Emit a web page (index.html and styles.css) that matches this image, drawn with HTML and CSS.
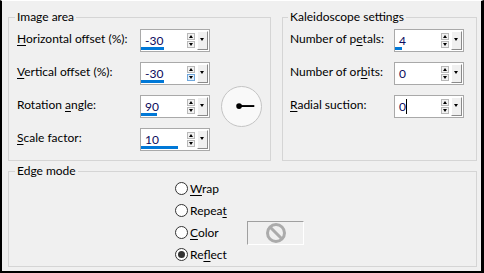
FILE: index.html
```html
<!DOCTYPE html>
<html lang="en">
<head>
  <meta charset="UTF-8" />
  <title>Kaleidoscope</title>
  <link rel="stylesheet" href="styles.css">
</head>
<body>
  <div class="window">
    <div class="top-row">
      <fieldset class="group group-image">
        <legend>Image area</legend>
        <div class="form-grid grid-image">
          <label class="lbl"><u>H</u>orizontal offset (%):</label>
          <div class="spin">
            <div class="field"><span class="val">-30</span><span class="bar" style="width:23px"></span></div>
            <div class="steps"><span class="step up"></span><span class="step down"></span></div>
            <div class="drop"></div>
          </div>

          <label class="lbl"><u>V</u>ertical offset (%):</label>
          <div class="spin">
            <div class="field"><span class="val">-30</span><span class="bar" style="width:23px"></span></div>
            <div class="steps"><span class="step up"></span><span class="step down hot"></span></div>
            <div class="drop"></div>
          </div>

          <label class="lbl">Rotation <u>a</u>ngle:</label>
          <div class="spin">
            <div class="field"><span class="val">90</span><span class="bar" style="width:16px"></span></div>
            <div class="steps"><span class="step up"></span><span class="step down"></span></div>
            <div class="drop"></div>
          </div>

          <label class="lbl"><u>S</u>cale factor:</label>
          <div class="spin">
            <div class="field"><span class="val">10</span><span class="bar" style="width:37px"></span></div>
            <div class="steps"><span class="step up"></span><span class="step down"></span></div>
            <div class="drop"></div>
          </div>

          <div class="dial">
            <svg width="41" height="41" viewBox="0 0 41 41">
              <line x1="19" y1="20" x2="35" y2="20" stroke="#000" stroke-width="2" />
              <circle cx="19" cy="20" r="3" fill="#000" />
            </svg>
          </div>
        </div>
      </fieldset>

      <fieldset class="group group-kal">
        <legend>Kaleidoscope settings</legend>
        <div class="form-grid grid-kal">
          <label class="lbl">Number of p<u>e</u>tals:</label>
          <div class="spin">
            <div class="field"><span class="val">4</span><span class="bar" style="width:7px"></span></div>
            <div class="steps"><span class="step up"></span><span class="step down"></span></div>
            <div class="drop"></div>
          </div>

          <label class="lbl">Number of or<u>b</u>its:</label>
          <div class="spin">
            <div class="field"><span class="val">0</span></div>
            <div class="steps"><span class="step up"></span><span class="step down"></span></div>
            <div class="drop"></div>
          </div>

          <label class="lbl"><u>R</u>adial suction:</label>
          <div class="spin">
            <div class="field"><span class="val caret">0</span></div>
            <div class="steps"><span class="step up"></span><span class="step down"></span></div>
            <div class="drop"></div>
          </div>
        </div>
      </fieldset>
    </div>

    <fieldset class="group group-edge">
      <legend>Edge mode</legend>
      <div class="edge-grid">
        <div class="opt"><span class="radio"></span><span><u>W</u>rap</span></div>
        <div class="opt"><span class="radio"></span><span>Repea<u>t</u></span></div>
        <div class="opt"><span class="radio"></span><span><u>C</u>olor</span></div>
        <div class="swatch">
          <svg width="22" height="22" viewBox="0 0 22 22">
            <circle cx="11" cy="11" r="8.5" fill="none" stroke="#ababab" stroke-width="3" />
            <line x1="5" y1="5" x2="17" y2="17" stroke="#ababab" stroke-width="3" />
          </svg>
        </div>
        <div class="opt"><span class="radio checked"></span><span>Re<u>f</u>lect</span></div>
      </div>
    </fieldset>
  </div>
</body>
</html>
```

FILE: styles.css
```css
* { box-sizing: border-box; margin: 0; padding: 0; }
body { background: #fff; font-family: Lato, 'Liberation Sans', sans-serif; font-size: 12px; color: #000; }

.window {
  width: 484px;
  height: 273px;
  background: #f0f0f0;
  border: 2px solid #000;
  border-top: 1px solid #fff;
  border-right-width: 3px;
  padding: 9px 4px 0 6px;
}

.top-row { display: flex; gap: 11px; height: 151px; }

.group {
  border: 1px solid #d5d5d5;
  min-width: 0;
}
.group legend {
  line-height: 14px;
  padding: 0 2px;
  margin-left: -2px;
}
.group-image { width: 263px; padding: 5px 0 0 8px; }
.group-kal { width: 195px; padding: 5px 0 0 7px; }
.group-edge { width: 469px; height: 103px; margin-top: 3px; padding: 0 0 0 8px; }

.form-grid {
  display: grid;
  grid-template-rows: repeat(4, 23px);
  row-gap: 10px;
  align-items: center;
}
.grid-image { grid-template-columns: 123px 70px 52px; }
.grid-kal { grid-template-columns: 104px 70px; }

.lbl { grid-column: 1; padding-bottom: 4px; white-space: nowrap; }
u { text-decoration: underline; text-underline-offset: 2px; }

/* spinner with slider dropdown */
.spin {
  grid-column: 2;
  display: flex;
  height: 23px;
  border: 1px solid #a9a9a9;
  background: #fff;
}
.field { flex: 1; position: relative; padding: 3px 0 0 4px; }
.val { color: #0b0b5c; }
.caret { border-right: 1px solid #000; }
.bar {
  position: absolute;
  left: 0;
  bottom: 1px;
  height: 3px;
  background: #0078d7;
}
.steps {
  width: 8px;
  margin: 2px 2px 0 0;
  display: flex;
  flex-direction: column;
  justify-content: center;
  gap: 1px;
  padding-bottom: 3px;
}
.step {
  height: 7px;
  border: 1px solid #b9b9b9;
  background: #f2f2f2;
  position: relative;
}
.step::after {
  content: "";
  position: absolute;
  left: 1px;
  border-left: 2.5px solid transparent;
  border-right: 2.5px solid transparent;
}
.step.up::after { top: 1px; border-bottom: 3px solid #000; }
.step.down::after { top: 1px; border-top: 3px solid #000; }
.step.hot { border-color: #6fa7dc; background: #e3effa; }

.drop {
  width: 11px;
  margin: 1px 1px 1px 0;
  background: #f0f0f0;
  border-top: 1px solid #fff;
  border-left: 1px solid #fff;
  border-right: 1px solid #8a8a8a;
  border-bottom: 1px solid #8a8a8a;
  position: relative;
}
.drop::after {
  content: "";
  position: absolute;
  top: 6px;
  left: 2px;
  border-left: 2.5px solid transparent;
  border-right: 2.5px solid transparent;
  border-top: 3px solid #000;
}

.dial {
  grid-column: 3;
  grid-row: 2 / span 3;
  align-self: center;
  margin-left: 11px;
  width: 41px;
  height: 41px;
  border: 1px solid #c4c4c4;
  border-radius: 50%;
  background: #f9f9f9;
  display: flex;
  align-items: center;
  justify-content: center;
}
.dial svg { position: relative; left: -1px; }

/* edge mode radios */
.edge-grid {
  display: grid;
  grid-template-columns: 72px 57px;
  grid-template-rows: repeat(4, 22px);
  margin: -1px 0 0 158px;
}
.opt { grid-column: 1; display: flex; align-items: center; gap: 2px; white-space: nowrap; }
.opt:nth-child(5) { grid-row: 4; }
.radio {
  width: 13px;
  height: 13px;
  border: 1px solid #333;
  border-radius: 50%;
  background: #fff;
  position: relative;
}
.radio.checked::after {
  content: "";
  position: absolute;
  left: 2px;
  top: 2px;
  width: 7px;
  height: 7px;
  border-radius: 50%;
  background: #333;
}
.swatch {
  grid-column: 2;
  grid-row: 3;
  align-self: start;
  height: 24px;
  border-top: 1px solid #a0a0a0;
  border-left: 1px solid #a0a0a0;
  border-right: 1px solid #fff;
  border-bottom: 1px solid #fff;
  background: #f0f0f0;
  display: flex;
  align-items: center;
  justify-content: center;
}
```
